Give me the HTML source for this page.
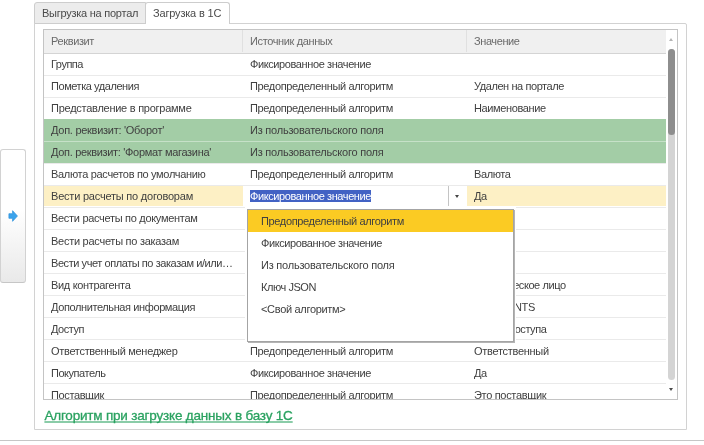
<!DOCTYPE html>
<html><head><meta charset="utf-8">
<style>
html,body{margin:0;padding:0;background:#fff;}
body{width:704px;height:445px;position:relative;overflow:hidden;filter:blur(0.4px);font-family:"Liberation Sans",sans-serif;font-size:11px;color:#404040;}
div{box-sizing:border-box;position:absolute;}
.t{white-space:pre;line-height:22px;height:22px;top:0;}
#lbtn{left:0px;top:149px;width:26px;height:134px;border:1px solid #d2d2d2;border-bottom-color:#c6c6c6;border-radius:3px;background:linear-gradient(#fff 45%,#e9e9e9);}
#panel{left:34px;top:23px;width:653px;height:407px;border:1px solid #d2d2d2;border-radius:0 2px 0 0;}
#tab1{left:34px;top:2px;width:112px;height:22px;border:1px solid #cdcdcd;border-radius:3px 0 0 0;background:#ececec;}
#tab2{left:145px;top:2px;width:85px;height:22px;border:1px solid #cdcdcd;border-bottom:none;border-radius:3px 3px 0 0;background:#fff;}
.tab .t{font-size:11px;line-height:21px;height:21px;color:#4a4a4a;}
#tbl{left:43px;top:29px;width:635px;height:371px;border:1px solid #c4c4c4;overflow:hidden;background:#fff;}
#hdr{left:0;top:0;width:622px;height:23px;background:#f0f0f0;color:#6a6a6a;}
.row{left:0;width:622px;height:22px;border-top:1px solid #eaeaea;}
.row .t{top:-1px;}
.c1{left:7px;}.c2{left:206px;}.c3{left:430px;}
.g{background:#a3cda6;border-top-color:#a3cda6;}
.g2{border-top-color:#c6e1c8;}
.y{background:linear-gradient(#fdf0c5,#fdf0c5) no-repeat;background-size:100% 20px;}
#bline{left:0;top:440px;width:704px;height:1px;background:#c6c6c6;}
#link{left:44.4px;top:407px;height:18px;color:#2aa260;}
#link .t{font-size:13.5px;line-height:18px;height:18px;-webkit-text-stroke:0.3px #2aa260;text-decoration:underline;text-decoration-color:rgba(42,162,96,.55);text-underline-offset:1px;text-decoration-thickness:1.5px;text-decoration-skip-ink:none;}
#dd{left:247px;top:209px;width:267px;height:133px;border:1px solid #a4a4a4;background:#fff;box-shadow:1px 1px 0 #b4b4b4,0 0 0 2px #fff;}
.it{left:0;width:265px;height:22px;}
.it .t{left:13px;transform:translateY(-0.5px);}
</style></head><body>
<div id="lbtn"><svg style="position:absolute;left:6.5px;top:60px" width="11" height="12" viewBox="0 0 12 13"><path d="M1 4h4v-3.3l5.3 5.8-5.3 5.8v-3.3h-4z" fill="#3aa3ec" stroke="#2f93dc" stroke-width=".8"/></svg></div>
<div id="panel"></div>
<div id="tab1" class="tab"><div class="t " style="letter-spacing:-0.248px;left:7px">Выгрузка на портал</div></div>
<div id="tab2" class="tab"><div class="t " style="letter-spacing:-0.178px;left:7px">Загрузка в 1С</div></div>
<div id="tbl">
 <div id="hdr"><div class="t c1" style="letter-spacing:-0.375px;">Реквизит</div><div class="t c2" style="letter-spacing:-0.374px;">Источник данных</div><div class="t c3" style="letter-spacing:-0.41px;">Значение</div><div style="left:198px;top:0;width:1px;height:22px;background:#e0e0e0"></div><div style="left:422px;top:0;width:1px;height:22px;background:#e0e0e0"></div></div>
 <div class="row " style="top:23px;border-top-color:#d4d4d4"><div class="t c1" style="letter-spacing:-0.479px;">Группа</div><div class="t c2" style="letter-spacing:-0.4px;">Фиксированное значение</div></div>
 <div class="row " style="top:45px"><div class="t c1" style="letter-spacing:-0.438px;transform:translateY(0.07px);">Пометка удаления</div><div class="t c2" style="letter-spacing:-0.346px;transform:translateY(0.07px);">Предопределенный алгоритм</div><div class="t c3" style="letter-spacing:-0.418px;transform:translateY(0.07px);">Удален на портале</div></div>
 <div class="row " style="top:67px"><div class="t c1" style="letter-spacing:-0.258px;transform:translateY(0.13px);">Представление в программе</div><div class="t c2" style="letter-spacing:-0.346px;transform:translateY(0.13px);">Предопределенный алгоритм</div><div class="t c3" style="letter-spacing:-0.376px;transform:translateY(0.13px);">Наименование</div></div>
 <div class="row g" style="top:89px"><div class="t c1" style="letter-spacing:-0.276px;transform:translateY(0.20px);">Доп. реквизит: &#x27;Оборот&#x27;</div><div class="t c2" style="letter-spacing:-0.226px;transform:translateY(0.20px);">Из пользовательского поля</div></div>
 <div class="row g g2" style="top:111px"><div class="t c1" style="letter-spacing:-0.322px;transform:translateY(0.27px);">Доп. реквизит: &#x27;Формат магазина&#x27;</div><div class="t c2" style="letter-spacing:-0.226px;transform:translateY(0.27px);">Из пользовательского поля</div></div>
 <div class="row " style="top:133px"><div class="t c1" style="letter-spacing:-0.319px;transform:translateY(0.33px);">Валюта расчетов по умолчанию</div><div class="t c2" style="letter-spacing:-0.346px;transform:translateY(0.33px);">Предопределенный алгоритм</div><div class="t c3" style="letter-spacing:-0.404px;transform:translateY(0.33px);">Валюта</div></div>
 <div class="row y" style="top:155px"><div class="t c1" style="letter-spacing:-0.211px;transform:translateY(0.40px);">Вести расчеты по договорам</div><div style="left:199px;top:0;width:224px;height:21px;background:#fff"></div><div class="t c2" style="letter-spacing:-0.4px"><span style="background:#4262c4;color:#fff;padding:0">Фиксированное значение</span></div><div style="left:404px;top:0;width:1px;height:20px;background:#c4c4c4"></div><div style="left:410.5px;top:9px;width:0;height:0;border-left:2.5px solid transparent;border-right:2.5px solid transparent;border-top:3px solid #444"></div><div class="t c3" style="letter-spacing:-0.539px;transform:translateY(0.40px);">Да</div></div>
 <div class="row " style="top:177px"><div class="t c1" style="letter-spacing:-0.301px;transform:translateY(0.47px);">Вести расчеты по документам</div></div>
 <div class="row " style="top:199px"><div class="t c1" style="letter-spacing:-0.265px;transform:translateY(0.53px);">Вести расчеты по заказам</div></div>
 <div class="row " style="top:221px"><div class="t c1" style="letter-spacing:-0.433px;transform:translateY(0.60px);">Вести учет оплаты по заказам и/или…</div></div>
 <div class="row " style="top:243px"><div class="t c1" style="letter-spacing:-0.324px;transform:translateY(0.67px);">Вид контрагента</div><div class="t c3" style="letter-spacing:-0.423px;transform:translateY(0.67px);">Юридическое лицо</div></div>
 <div class="row " style="top:265px"><div class="t c1" style="letter-spacing:-0.391px;transform:translateY(0.73px);">Дополнительная информация</div><div class="t c3" style="letter-spacing:-0.421px;transform:translateY(0.73px);">COMMENTS</div></div>
 <div class="row " style="top:287px"><div class="t c1" style="letter-spacing:-0.469px;transform:translateY(0.80px);">Доступ</div><div class="t c3" style="letter-spacing:-0.457px;transform:translateY(0.80px);">Группа доступа</div></div>
 <div class="row " style="top:309px"><div class="t c1" style="letter-spacing:-0.308px;transform:translateY(0.87px);">Ответственный менеджер</div><div class="t c2" style="letter-spacing:-0.346px;transform:translateY(0.87px);">Предопределенный алгоритм</div><div class="t c3" style="letter-spacing:-0.289px;transform:translateY(0.87px);">Ответственный</div></div>
 <div class="row " style="top:331px"><div class="t c1" style="letter-spacing:-0.461px;transform:translateY(0.93px);">Покупатель</div><div class="t c2" style="letter-spacing:-0.4px;transform:translateY(0.93px);">Фиксированное значение</div><div class="t c3" style="letter-spacing:-0.539px;transform:translateY(0.93px);">Да</div></div>
 <div class="row " style="top:353px"><div class="t c1" style="letter-spacing:-0.38px;transform:translateY(1.00px);">Поставщик</div><div class="t c2" style="letter-spacing:-0.346px;transform:translateY(1.00px);">Предопределенный алгоритм</div><div class="t c3" style="letter-spacing:-0.319px;transform:translateY(1.00px);">Это поставщик</div></div>
 <div style="left:624px;top:19px;width:7px;height:331px;background:#d4d4d4;border-radius:4px"></div>
 <div style="left:624px;top:19px;width:7px;height:86px;background:#8e8e8e;border-radius:4px"></div>
 <div style="left:625px;top:8px;width:0;height:0;border-left:2px solid transparent;border-right:2px solid transparent;border-bottom:3px solid #b4b4b4"></div>
 <div style="left:625px;top:358px;width:0;height:0;border-left:2px solid transparent;border-right:2px solid transparent;border-top:3.5px solid #4a4a4a"></div>
</div>
<div id="link"><div class="t " style="letter-spacing:-0.193px;">Алгоритм при загрузке данных в базу 1С</div></div>
<div id="dd">
 <div class="it" style="top:0px;background:#fbcb23"><div class="t " style="letter-spacing:-0.346px;">Предопределенный алгоритм</div></div>
 <div class="it" style="top:22px"><div class="t " style="letter-spacing:-0.4px;">Фиксированное значение</div></div>
 <div class="it" style="top:44px"><div class="t " style="letter-spacing:-0.226px;">Из пользовательского поля</div></div>
 <div class="it" style="top:66px"><div class="t " style="letter-spacing:-0.441px;">Ключ JSON</div></div>
 <div class="it" style="top:88px"><div class="t " style="letter-spacing:-0.315px;">&lt;Свой алгоритм&gt;</div></div>
</div>
<div id="bline"></div>
</body></html>
